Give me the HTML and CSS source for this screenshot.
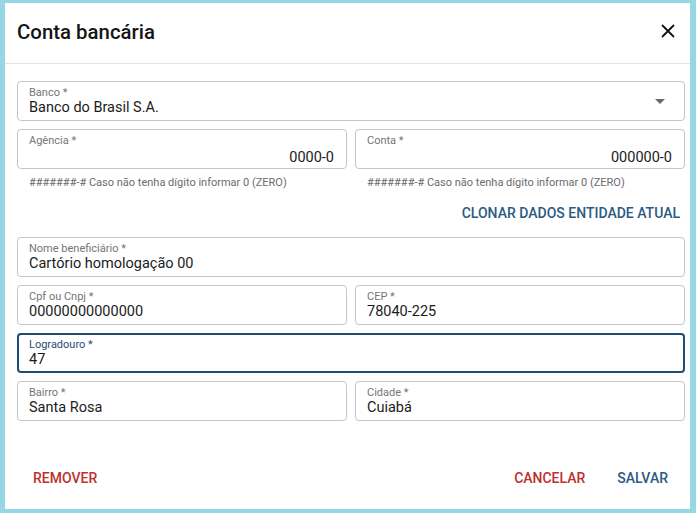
FILE: index.html
```html
<!DOCTYPE html>
<html lang="pt-BR">
<head>
    <meta charset="UTF-8">
    <meta name="viewport" content="width=device-width, initial-scale=1.0">
    <title>Conta bancária</title>
    <link rel="stylesheet" href="styles.css">
</head>
<body>
    <div class="dialog">
        <!-- Header -->
        <div class="dialog-header">
            <h2 class="dialog-title">Conta bancária</h2>
            <button class="close-btn" type="button" aria-label="Fechar">
                <svg width="14" height="14" viewBox="0 0 14 14">
                    <path d="M1 1 L13 13 M13 1 L1 13" stroke="#111" stroke-width="1.8" fill="none"/>
                </svg>
            </button>
        </div>

        <form class="dialog-body" id="conta-form">
            <!-- Banco -->
            <div class="field select">
                <label for="banco">Banco *</label>
                <input type="text" id="banco" value="Banco do Brasil S.A." readonly>
                <span class="arrow"></span>
            </div>

            <!-- Agencia / Conta -->
            <div class="row">
                <div class="col">
                    <div class="field">
                        <label for="agencia">Agência *</label>
                        <input type="text" id="agencia" class="right" value="0000-0">
                    </div>
                    <p class="hint">#######-# Caso não tenha dígito informar 0 (ZERO)</p>
                </div>
                <div class="col">
                    <div class="field">
                        <label for="conta">Conta *</label>
                        <input type="text" id="conta" class="right" value="000000-0">
                    </div>
                    <p class="hint">#######-# Caso não tenha dígito informar 0 (ZERO)</p>
                </div>
            </div>

            <div class="clone-row">
                <button type="button" class="text-btn primary">Clonar dados entidade atual</button>
            </div>

            <!-- Beneficiario -->
            <div class="field">
                <label for="nome">Nome beneficiário *</label>
                <input type="text" id="nome" value="Cartório homologação 00">
            </div>

            <div class="row">
                <div class="field">
                    <label for="cpf">Cpf ou Cnpj *</label>
                    <input type="text" id="cpf" value="00000000000000">
                </div>
                <div class="field">
                    <label for="cep">CEP *</label>
                    <input type="text" id="cep" value="78040-225">
                </div>
            </div>

            <div class="field focused">
                <label for="logradouro">Logradouro *</label>
                <input type="text" id="logradouro" value="47">
            </div>

            <div class="row">
                <div class="field">
                    <label for="bairro">Bairro *</label>
                    <input type="text" id="bairro" value="Santa Rosa">
                </div>
                <div class="field">
                    <label for="cidade">Cidade *</label>
                    <input type="text" id="cidade" value="Cuiabá">
                </div>
            </div>
        </form>

        <!-- Actions -->
        <div class="dialog-actions">
            <button type="button" class="text-btn danger">Remover</button>
            <div class="spacer"></div>
            <button type="button" class="text-btn danger">Cancelar</button>
            <button type="submit" form="conta-form" class="text-btn primary">Salvar</button>
        </div>
    </div>
</body>
</html>
```

FILE: styles.css
```css
body {
    font-family: 'Roboto', sans-serif;
    margin: 0;
    padding: 3px 6px 4px 5px;
    background-color: #97d7e5;
}

.dialog {
    height: 506px;
    background: #fff;
    display: flex;
    flex-direction: column;
}

.dialog-header {
    display: flex;
    align-items: center;
    height: 60px;
    padding: 0 12px;
    border-bottom: 1px solid #e2e2e2;
}

.dialog-title {
    flex: 1;
    margin: 0;
    margin-top: -3px;
    font-size: 20.4px;
    font-weight: 500;
    color: #151515;
}

.close-btn {
    width: 24px;
    height: 24px;
    margin-right: -2px;
    margin-top: -5px;
    padding: 0;
    border: none;
    background: none;
    display: flex;
    align-items: center;
    justify-content: center;
    cursor: pointer;
}

.dialog-body {
    flex: 1;
    display: flex;
    flex-direction: column;
    gap: 8px;
    padding: 17px 5px 0 12px;
}

.row {
    display: grid;
    grid-template-columns: 1fr 1fr;
    gap: 8px;
}

.field {
    position: relative;
    height: 40px;
    box-sizing: border-box;
    border: 1px solid #c6c6c6;
    border-radius: 4px;
    padding: 4px 12px 0 11px;
    display: flex;
    flex-direction: column;
}

.field label {
    font-size: 11px;
    line-height: 13px;
    color: #757575;
}

.field input {
    border: none;
    outline: none;
    padding: 0;
    margin: 0;
    font-family: inherit;
    font-size: 14.5px;
    line-height: 18px;
    color: #1b1b1b;
    background: transparent;
    width: 100%;
}

.field input.right {
    text-align: right;
    margin-top: 2px;
}

.field.focused {
    border: 2px solid #1f4d74;
    padding: 3px 11px 0 10px;
}

.field.focused label {
    color: #1f4d74;
}

.field.select input {
    width: calc(100% - 30px);
}

.arrow {
    position: absolute;
    right: 19px;
    top: 17px;
    border-left: 5px solid transparent;
    border-right: 5px solid transparent;
    border-top: 5px solid #6a6a6a;
}

.col {
    display: flex;
    flex-direction: column;
}

.hint {
    margin: 7px 0 0 12px;
    font-size: 11px;
    line-height: 13px;
    color: #6b6b6b;
}

.clone-row {
    display: flex;
    justify-content: flex-end;
    height: 32px;
}

.text-btn {
    border: none;
    background: none;
    font-family: inherit;
    font-size: 14px;
    font-weight: 500;
    text-transform: uppercase;
    padding: 0 5px;
    height: 32px;
    cursor: pointer;
}

.primary {
    color: #2c5a82;
}

.danger {
    color: #c0302f;
}

.dialog-actions {
    display: flex;
    align-items: center;
    padding: 0 17px 13px 23px;
    height: 36px;
}

.dialog-actions .text-btn {
    padding: 0 5px;
    height: 36px;
}

.dialog-actions .text-btn + .text-btn {
    margin-left: 22px;
}

.spacer {
    flex: 1;
}
```
